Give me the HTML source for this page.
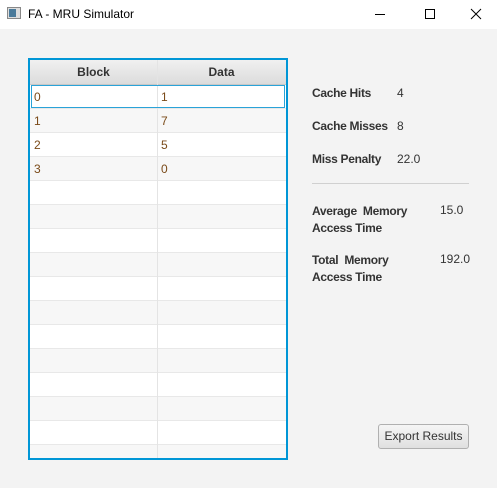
<!DOCTYPE html>
<html><head><style>
body{margin:0;width:497px;height:488px;background:#f3f3f3;font-family:"Liberation Sans",sans-serif;position:relative;overflow:hidden}
.tb{position:absolute;left:0;top:0;width:497px;height:29px;background:#fff}
.t{position:absolute;font-size:12px;color:#333}
.b{font-weight:bold;letter-spacing:-0.3px}
.tbl{position:absolute;left:28px;top:58px;width:256px;height:398px;border:2px solid #0096d6;background:#fff;overflow:hidden}
.hd{position:absolute;left:0;top:0;width:256px;height:24px;background:linear-gradient(#f0f0f0,#dcdcdc);border-bottom:1px solid #c8c8c8}
.hd div{position:absolute;top:5px;font-weight:bold;font-size:12px;color:#333;width:127px;text-align:center}
.row{position:absolute;left:0;width:256px;height:23px;border-bottom:1px solid #e8e8e8}
.row span{position:absolute;top:5px;font-size:12px;color:#7a4a18}
.vl{position:absolute;left:127px;top:0;width:1px;height:400px;background:#e4e4e4}
</style></head><body>
<div class="tb"></div>
<svg style="position:absolute;left:7px;top:7px" width="14" height="12"><rect x="0.5" y="0.5" width="13" height="11" fill="#ddd" stroke="#888"/><rect x="2" y="2" width="7" height="8" fill="#4a7a9a"/></svg>
<div class="t" style="left:28px;top:7px;font-size:12px;color:#000">FA - MRU Simulator</div>
<svg style="position:absolute;left:375px;top:8px" width="110" height="12"><line x1="0" y1="6.5" x2="10" y2="6.5" stroke="#000"/><rect x="50.5" y="1.5" width="9" height="9" fill="none" stroke="#000"/><path d="M96 1L106 11M106 1L96 11" stroke="#000"/></svg>
<div class="tbl">
<div class="hd"><div style="left:0">Block</div><div style="left:128px">Data</div></div>
<div id="rows"></div>
<div class="vl"></div>
<div style="position:absolute;left:1px;top:25px;width:252px;height:21px;border:1px solid #2aa3d8"></div>
</div>
<script>
var r=document.getElementById('rows'),d=[[0,1],[1,7],[2,5],[3,0]],h='';
for(var i=0;i<16;i++){h+='<div class="row" style="top:'+(25+24*i)+'px;background:'+(i%2?'#f7f7f7':'#fff')+'">'+(d[i]?'<span style="left:4px">'+d[i][0]+'</span><span style="left:131px">'+d[i][1]+'</span>':'')+'</div>';}
r.innerHTML=h;
</script>
<div class="t b" style="left:312px;top:86px">Cache Hits</div><div class="t" style="left:397px;top:86px">4</div>
<div class="t b" style="left:312px;top:119px">Cache Misses</div><div class="t" style="left:397px;top:119px">8</div>
<div class="t b" style="left:312px;top:152px">Miss Penalty</div><div class="t" style="left:397px;top:152px">22.0</div>
<div style="position:absolute;left:312px;top:183px;width:157px;height:1px;background:#d0d0d0"></div>
<div class="t b" style="left:312px;top:203px;line-height:17px">Average&nbsp; Memory<br>Access Time</div><div class="t" style="left:440px;top:203px">15.0</div>
<div class="t b" style="left:312px;top:252px;line-height:17px">Total&nbsp; Memory<br>Access Time</div><div class="t" style="left:440px;top:252px">192.0</div>
<div style="position:absolute;left:378px;top:424px;width:89px;height:23px;border:1px solid #b0b0b0;border-radius:3px;background:linear-gradient(#f5f5f5,#e0e0e0);font-size:12px;color:#333;text-align:center;line-height:23px">Export Results</div>
</body></html>
